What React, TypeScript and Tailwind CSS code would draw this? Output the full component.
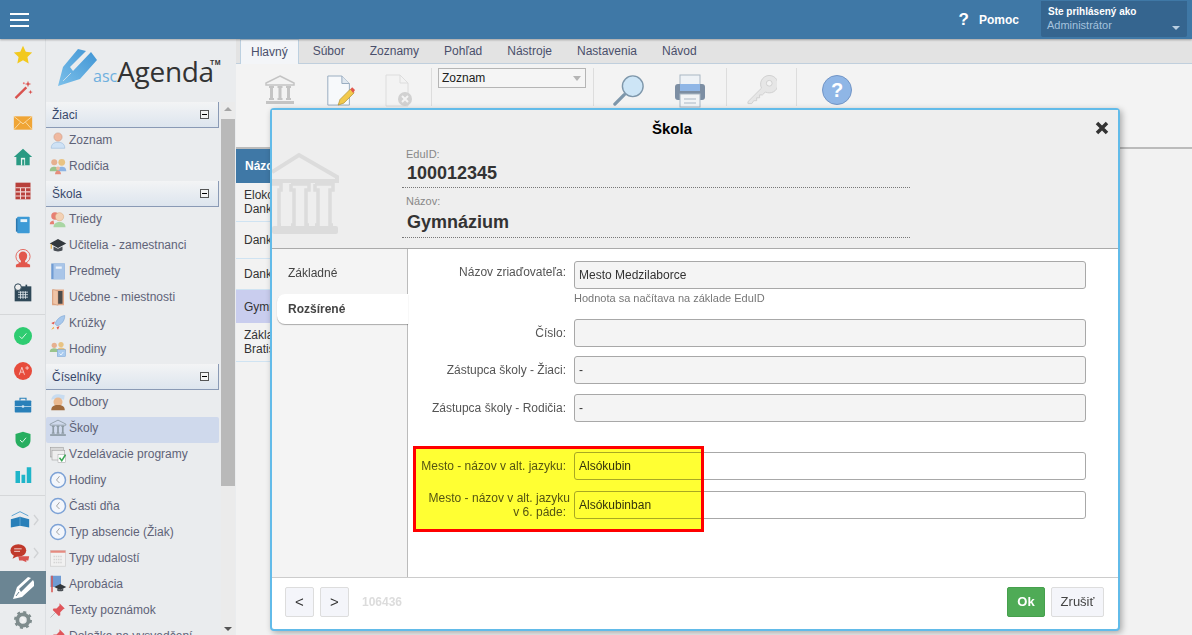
import type { ReactNode } from 'react'

const Ico = ({ children, className = 'w-[18px] h-[18px]', box = '0 0 24 24' }: { children: ReactNode; className?: string; box?: string }) => (
  <svg viewBox={box} className={`${className} shrink-0`}>{children}</svg>
)

const Bank = ({ c = '#9aa6ad', className }: { c?: string; className?: string }) => (
  <Ico className={className} box="0 0 32 32">
    <path d="M16 2 L30 9 V11 H2 V9 Z" fill="none" stroke={c} strokeWidth="1.5" />
    <path d="M5 12h5v2H9v10h1v2H5v-2h1V14H5zM13.500 12h5v2h-1v10h1v2h-5v-2h1V14h-1zM22 12h5v2h-1v10h1v2h-5v-2h1V14h-1z" fill={c} />
    <rect x="2" y="27" width="28" height="3" fill={c} />
  </Ico>
)

const Clock = () => (
  <Ico>
    <circle cx="12" cy="12" r="10" fill="#f3f6fb" stroke="#7da2d6" strokeWidth="2" />
    <path d="M14 7l-4 5 4 4" fill="none" stroke="#9a9a9a" strokeWidth="1.200" />
  </Ico>
)

const Pin = () => (
  <Ico>
    <path d="M2 22l8-8" stroke="#b8b8b8" strokeWidth="1.200" />
    <path d="M14 3l7 7-2 1-4 4 0 4-2 1-8-8 1-2h4l4-4z" fill="#e0555a" />
  </Ico>
)

const Chevron = () => (
  <svg viewBox="0 0 6 12" className="w-[6px] h-[12px] shrink-0"><path d="M1 1l4 5-4 5" fill="none" stroke="#d0d2d4" strokeWidth="1.300" /></svg>
)

const railTop = [
  <Ico className="w-[20px] h-[20px]"><path d="M12 1l3.300 7.200 7.700.9-5.700 5.300 1.500 7.800L12 18.300 5.200 22.200l1.500-7.800L1 9.100l7.700-.9z" fill="#f2c91e" /></Ico>,
  <Ico className="w-[20px] h-[20px]"><path d="M2 22L15 9l2 2L4 24z" fill="#d9534f" /><path d="M18 2l1 3 3 1-3 1-1 3-1-3-3-1 3-1zM21 13l.7 2 2 .7-2 .7-.7 2-.7-2-2-.7 2-.7z" fill="#d9534f" /><circle cx="13" cy="5" r="1.200" fill="#e77" /></Ico>,
  <Ico className="w-[20px] h-[20px]"><rect x="1" y="4" width="22" height="16" fill="#f0a535" /><path d="M1 4l11 9 11-9M1 20l8-9M23 20l-8-9" fill="none" stroke="#fbe3b5" strokeWidth="1" /></Ico>,
  <Ico className="w-[20px] h-[20px]"><path d="M12 2L1 12h3v10h16V12h3z" fill="#2a9a83" /><rect x="9.500" y="13" width="5" height="9" fill="#e9f4f1" /><rect x="11" y="15" width="2.500" height="7" fill="#2a9a83" /></Ico>,
  <Ico className="w-[20px] h-[20px]"><rect x="3" y="2" width="18" height="20" fill="#b8403b" /><path d="M3 8h18M3 13h18M3 18h18M9 8v14M15 8v14" stroke="#f1d8d6" strokeWidth="1.300" /></Ico>,
  <Ico className="w-[20px] h-[20px]"><rect x="5" y="2" width="15" height="20" rx="1" fill="#3d9ad6" /><rect x="3.500" y="4" width="2" height="16" fill="#2a78b0" /><rect x="9" y="5" width="8" height="3.500" fill="#e8f3fa" /></Ico>,
  <Ico className="w-[20px] h-[20px]"><circle cx="12" cy="9" r="8.500" fill="none" stroke="#e2574c" strokeWidth="1" /><path d="M12 3a5 5 0 0 1 5 5c0 3-1.500 5-2.500 6v2l6 3v3H3.500v-3l6-3v-2C8.500 13 7 11 7 8a5 5 0 0 1 5-5z" fill="#e2574c" /></Ico>,
  <Ico className="w-[20px] h-[20px]"><rect x="2" y="4" width="20" height="18" fill="#2f4858" /><path d="M6 11h12M6 14h12M6 17h12M9 10v9M12 10v9M15 10v9" stroke="#dfe6ea" strokeWidth="1" /><rect x="15" y="2" width="2" height="4" fill="#2f4858" /><circle cx="6" cy="5" r="4" fill="#eee" stroke="#2f4858" strokeWidth="1.200" /></Ico>,
]

const railMid = [
  <Ico className="w-[18px] h-[18px]"><circle cx="12" cy="12" r="12" fill="#2ecc71" /><path d="M7.500 12.500l3 3 6-7" fill="none" stroke="#dff7e8" strokeWidth="1.300" /></Ico>,
  <Ico className="w-[18px] h-[18px]"><circle cx="12" cy="12" r="12" fill="#e74c3c" /><path d="M7 17l3.500-10L14 17M8.300 13.500h4.500M15 8h5M17.500 5.500v5" fill="none" stroke="#f8d3cf" strokeWidth="1.200" /></Ico>,
  <Ico className="w-[18px] h-[18px]"><rect x="1" y="6" width="22" height="16" rx="1" fill="#2980b9" /><path d="M8 6V3h8v3" fill="none" stroke="#2980b9" strokeWidth="1.500" /><path d="M1 14h22" stroke="#d5e6f2" strokeWidth="1" /><rect x="10.500" y="12.500" width="3" height="3" fill="#d5e6f2" /></Ico>,
  <Ico className="w-[18px] h-[18px]"><path d="M12 1l10 3v8c0 6-4 9.500-10 11C6 21.500 2 18 2 12V4z" fill="#27ae60" /><path d="M8 12l3 3 5-6" fill="none" stroke="#dff7e8" strokeWidth="1.300" /></Ico>,
  <Ico className="w-[18px] h-[18px]"><path d="M2 8h6v16H2zM10 13h5v11h-5zM17 3h6v21h-6z" fill="#1fb5c9" /></Ico>,
]

type Item = { t: string; i: ReactNode; active?: boolean }

const items1: Item[] = [
  { t: 'Zoznam', i: <Ico><circle cx="12" cy="8" r="5.500" fill="#f0b9a0" stroke="#c89a84" strokeWidth=".7" /><path d="M3 23c0-6 4-8 9-8s9 2 9 8z" fill="#cfe2f5" stroke="#8fb2d6" strokeWidth=".7" /></Ico> },
  { t: 'Rodičia', i: <Ico><circle cx="7" cy="7" r="4" fill="#e6b08f" /><path d="M1 19c0-5 3-6 6-6s5 1 5 6z" fill="#9ac48c" /><circle cx="17" cy="7" r="4.500" fill="#e8c382" /><path d="M12 19c0-5 2-6 5-6s6 1 6 6z" fill="#8db4e4" /><circle cx="12" cy="15" r="2.500" fill="#f0b9a0" /><path d="M8 23c0-3 2-5 4-5s4 2 4 5z" fill="#e58e7c" /></Ico> },
]
const items2: Item[] = [
  { t: 'Triedy', i: <Ico><circle cx="8" cy="8" r="5" fill="#e77f72" /><circle cx="14" cy="9" r="5.500" fill="#f3d1b5" stroke="#d8a878" strokeWidth=".7" /><path d="M6 23c0-5 4-7 8-7s8 2 8 7z" fill="#a9d6a4" /><path d="M1 19c0-3 2-4 5-5l1 5z" fill="#e77f72" /></Ico> },
  { t: 'Učitelia - zamestnanci', i: <Ico><path d="M12 4L1 10l11 6 11-6z" fill="#33383d" /><path d="M6 14v5c2 2 10 2 12 0v-5l-6 3z" fill="#4a4f55" /><path d="M3 11v6" stroke="#e2a93b" strokeWidth="1.500" /></Ico> },
  { t: 'Predmety', i: <Ico><rect x="3" y="2" width="18" height="21" fill="#6f9bd3" /><rect x="6" y="2" width="15" height="21" fill="#a9c5e8" /><rect x="9" y="6" width="8" height="3" fill="#eef4fb" /></Ico> },
  { t: 'Učebne - miestnosti', i: <Ico><rect x="4" y="2" width="16" height="21" fill="#e4a987" /><rect x="11" y="4" width="7" height="17" fill="#4c4c4c" /><path d="M5 2l7 2v19l-7-2z" fill="#f0c4a6" stroke="#c08a68" strokeWidth=".5" /></Ico> },
  { t: 'Krúžky', i: <Ico><path d="M21 2c-7 1-11 6-13 11l3 3c5-2 10-6 10-14z" fill="#a8c8ec" stroke="#6e9bd0" strokeWidth=".7" /><path d="M8 10l-5 2 3 2zM14 16l-2 5-2-3z" fill="#e2574c" /><path d="M6 17l-3 4 4-2z" fill="#f0a535" /></Ico> },
  { t: 'Hodiny', i: <Ico><circle cx="7" cy="7" r="3.500" fill="#e6b08f" /><circle cx="16" cy="6" r="3.500" fill="#e8c382" /><path d="M1 16c0-4 3-5 6-5s5 1 5 5z" fill="#9ac48c" /><path d="M11 15c0-4 2-5 5-5s6 1 6 5z" fill="#e8c382" /><rect x="11" y="13" width="11" height="9" fill="#a9cbef" stroke="#6e9bd0" strokeWidth=".6" /><path d="M14 18l2 2 3-4" fill="none" stroke="#fff" strokeWidth="1" /></Ico> },
]
const items3: Item[] = [
  { t: 'Odbory', i: <Ico><path d="M3 9c1-6 6-8 12-7l6 1-1 6c-5-2-12-2-17 0z" fill="#c8dcf0" /><circle cx="12" cy="12" r="6" fill="#eab98f" /><path d="M3 23c0-5 3-7 9-7s9 2 9 7z" fill="#a06a3c" /></Ico> },
  { t: 'Školy', i: <Bank c="#8d9aa3" className="w-[18px] h-[18px]" />, active: true },
  { t: 'Vzdelávacie programy', i: <Ico><rect x="2" y="3" width="17" height="13" fill="#d8d8d8" stroke="#999" strokeWidth=".7" /><rect x="4" y="7" width="17" height="13" fill="#eee" stroke="#999" strokeWidth=".7" /><rect x="12" y="13" width="10" height="10" fill="#fff" stroke="#999" strokeWidth=".6" /><path d="M14 17l3 4 5-8" fill="none" stroke="#3aa655" strokeWidth="2" /></Ico> },
  { t: 'Hodiny', i: <Clock /> },
  { t: 'Časti dňa', i: <Clock /> },
  { t: 'Typ absencie (Žiak)', i: <Clock /> },
  { t: 'Typy udalostí', i: <Ico><rect x="2" y="2" width="20" height="21" fill="#f1f1f1" stroke="#cfcfcf" /><rect x="2" y="2" width="20" height="3" fill="#e58a80" /><path d="M6 10h12M6 14h12M6 18h12" stroke="#d5d5d5" strokeWidth="2" strokeDasharray="2 1" /></Ico> },
  { t: 'Aprobácia', i: <Ico><rect x="2" y="1" width="14" height="15" fill="#6f9bd3" /><rect x="3" y="1" width="2" height="22" fill="#d9534f" /><path d="M15 12l-8 4 8 4 8-4z" fill="#33383d" /><path d="M11 18v3c2 1 6 1 8 0v-3l-4 2z" fill="#4a4f55" /></Ico> },
  { t: 'Texty poznámok', i: <Pin /> },
  { t: 'Doložka na vysvedčení', i: <Pin /> },
]

const NavGroup = ({ title, items, gap, rowPad }: { title: string; items: Item[]; gap: string; rowPad: string }) => (
  <div className={gap}>
    <div className="h-[26px] flex items-center justify-between pl-[6px] pr-[9px] w-[173px] bg-gradient-to-b from-[#f3f4f5] to-[#dde5ee] border-b border-r border-[#8a9ab5] text-[12px] text-[#37476a]">
      {title}
      <span className="w-[9px] h-[9px] border border-[#555] bg-[#f4f4f4] flex items-center justify-center"><span className="w-[5px] h-px bg-black" /></span>
    </div>
    {items.map((it) => (
      <div key={it.t} className={`h-[26px] w-[173px] flex items-center gap-[2px] pl-[3px] text-[12px] whitespace-nowrap text-[#5f6378] ${rowPad} ${it.active ? 'bg-[#cfd9ec] rounded-[2px]' : ''}`}>
        {it.i}
        {it.t}
      </div>
    ))}
  </div>
)

const Field = ({ label, value, muted = true, className = '' }: { label: ReactNode; value: string; muted?: boolean; className?: string }) => (
  <div className={`flex items-center gap-[8px] ${className}`}>
    <div className="w-[158px] text-right text-[12px] leading-[14px] text-[#555]">{label}</div>
    <div className={`w-[512px] h-[28px] rounded-[3px] border border-[#a8a8a8] flex items-center pl-[4px] text-[12px] text-[#333] ${muted ? 'bg-[#f4f4f4]' : 'bg-white'}`}>{value}</div>
  </div>
)

export default function App() {
  return (
    <div className="relative w-[1192px] h-[635px] overflow-hidden flex flex-col bg-[#f2f2f2] font-['Liberation_Sans',Arial,sans-serif]">
      {/* top bar */}
      <header className="h-[39px] shrink-0 bg-[#3f78a6] flex items-center shadow-[0_1px_2px_rgba(0,0,0,0.3)] relative z-10">
        <div className="ml-[10px] w-[19px] flex flex-col gap-[4px]">
          <span className="h-[2px] bg-white" /><span className="h-[2px] bg-white" /><span className="h-[2px] bg-white" />
        </div>
        <div className="ml-auto flex items-center text-white">
          <span className="text-[17px] font-bold mr-[10px]">?</span>
          <span className="text-[12px] font-bold mr-[22px]">Pomoc</span>
          <div className="w-[146px] h-[36px] mb-[1px] mr-[5px] bg-[#35658f] rounded-b-[2px] px-[6px] pt-[4px] relative">
            <div className="text-[10px] leading-[13px] font-bold pl-px">Ste prihlásený ako</div>
            <div className="text-[11px] leading-[15px] text-[#a5c3de]">Administrátor</div>
            <span className="absolute right-[7px] top-[25px] border-x-[4px] border-x-transparent border-t-[4px] border-t-[#b9cfe2]" />
          </div>
        </div>
      </header>

      <div className="flex flex-1 min-h-0">
        {/* icon rail */}
        <aside className="w-[46px] shrink-0 bg-[#eaecee] flex flex-col items-center border-r border-[#dcdfe2]">
          <div className="w-full flex flex-col items-center gap-[14px] pt-[6px] pb-[11px] border-b border-[#d5d7d9]">
            {railTop}
          </div>
          <div className="w-full flex flex-col items-center gap-[16.500px] pt-[12px] pb-[12px] border-b border-[#d5d7d9]">
            {railMid}
          </div>
          <div className="h-[46px] pl-[10px] pt-[2px] w-full flex items-center gap-[3px]">
            <Ico className="w-[20px] h-[20px]"><path d="M12 8L1 11v10l11-2 11 2V11z" fill="#2980b9" /><path d="M12 8v11M2 7l10-5 10 5" fill="none" stroke="#5fa5d3" strokeWidth="1.200" /></Ico>
            <Chevron />
          </div>
          <div className="h-[29px] pl-[10px] pb-[7px] w-full flex items-center gap-[3px]">
            <Ico className="w-[20px] h-[20px]"><ellipse cx="10" cy="9" rx="9.500" ry="7.500" fill="#c0392b" /><path d="M5 14l-2 5 6-3z" fill="#c0392b" /><path d="M10 16h13l-1 5h-3l1 2-5-2h-4z" fill="#d9534f" /><path d="M5 7h9M5 10h7" stroke="#eecfcb" strokeWidth="1.200" /></Ico>
            <Chevron />
          </div>
          <div className="w-[46px] h-[33px] bg-[#6b8593] flex items-center justify-center">
            <Ico className="w-[24px] h-[24px]"><path d="M2 23L6 11 17 1l3 1L8 13l2 3L22 4l1 2 0 4-12 11z" fill="#fff" /><path d="M5 20l3-4" stroke="#6b8593" strokeWidth="1" /></Ico>
          </div>
          <div className="mt-[7px]">
            <Ico className="w-[18px] h-[18px]"><circle cx="12" cy="12" r="7.500" fill="none" stroke="#7f8c8d" strokeWidth="5" /><circle cx="12" cy="12" r="10.500" fill="none" stroke="#7f8c8d" strokeWidth="3" strokeDasharray="4 4.250" /><path d="M10 8l4 4-4 4" fill="none" stroke="#f4f4f4" strokeWidth="2" /></Ico>
          </div>
        </aside>

        {/* nav */}
        <nav className="w-[190px] shrink-0 bg-[#eaecee] flex flex-col">
          <div className="h-[63px] shrink-0 pl-[12px] flex items-start pt-[10px]">
            <Ico className="w-[40px] h-[39px]" box="0 0 40 39">
              <defs><linearGradient id="logo" x1="0" y1="1" x2="1" y2="0"><stop offset="0" stopColor="#7cc0ea" /><stop offset="1" stopColor="#3f94d4" /></linearGradient></defs>
              <path d="M0 37L5 18 20 0l8 2L12 18l3 4L33 3l6 8L22 30z" fill="url(#logo)" />
              <path d="M5 32l8-8" stroke="#eaecee" strokeWidth="1" opacity=".7" />
            </Ico>
            <div className="flex items-baseline -ml-[5px] mt-[8px] leading-none">
              <span className="text-[16px] text-[#6fb0de] font-['Open_Sans',sans-serif]">asc</span>
              <span className="text-[28px] font-medium tracking-[-0.3px] text-[#333] font-['Open_Sans',sans-serif]">Agenda</span>
            </div>
            <span className="text-[7px] font-bold text-[#333] mt-[10px] -ml-[4px] leading-none tracking-[0.5px]">TM</span>
          </div>
          <div className="flex flex-1 min-h-0">
            <div className="w-[175px] overflow-hidden">
              <NavGroup title="Žiaci" items={items1} gap="" rowPad="pb-[3px]" />
              <NavGroup title="Škola" items={items2} gap="mt-px" rowPad="pb-[3px]" />
              <NavGroup title="Číselníky" items={items3} gap="mt-px" rowPad="pb-[5px] translate-y-px" />
            </div>
            <div className="w-[14px] shrink-0 flex flex-col items-center bg-[#ebebeb]">
              <span className="mt-[5px] border-x-[4px] border-x-transparent border-b-[4px] border-b-[#a5a5a5]" />
              <div className="w-full h-[367px] mt-[8px] bg-[#b9b9b9]" />
              <span className="mt-auto mb-[4px] border-x-[4px] border-x-transparent border-t-[4px] border-t-[#555]" />
            </div>
          </div>
        </nav>

        {/* main */}
        <main className="flex-1 min-w-0 flex flex-col">
          <div className="h-[25px] shrink-0 bg-[#e3e3e3] border-b border-[#c0cfdd] flex items-end pl-[4px] text-[12px] text-[#4a4f6b]">
            <span className="h-[25px] -mb-px px-[10px] flex items-center bg-[#f3f5f8] border border-b-0 border-[#bcd0e0]">Hlavný</span>
            <span className="h-[24px] flex items-center pl-[14px] pr-[12px]">Súbor</span>
            <span className="h-[24px] flex items-center px-[13px]">Zoznamy</span>
            <span className="h-[24px] flex items-center px-[12px]">Pohľad</span>
            <span className="h-[24px] flex items-center pl-[13px] pr-[12px]">Nástroje</span>
            <span className="h-[24px] flex items-center px-[13px]">Nastavenia</span>
            <span className="h-[24px] flex items-center px-[12px]">Návod</span>
          </div>
          <div className="h-[85px] shrink-0 bg-[#f3f3f3] border-b-2 border-[#bbb] flex items-start pt-[4px] relative">
            <div className="flex items-start pt-[6px] pl-[28px] h-[39px]">
              <Bank c="#c4c4c4" className="w-[32px] h-[32px]" />
              <Ico className="w-[30px] h-[34px] ml-[29px]" box="0 0 32 34">
                <path d="M3 1h15l8 8v23H3z" fill="#f7f9fb" stroke="#94a9bd" strokeWidth="1" /><path d="M18 1v8h8" fill="#dfe7ef" stroke="#94a9bd" strokeWidth="1" />
                <path d="M14 32l2-6 11-11 4 4-11 11z" fill="#f2c94c" stroke="#a98a2c" strokeWidth=".7" /><path d="M27 15l2-2 3 3-2 3z" fill="#e2574c" />
              </Ico>
              <Ico className="w-[30px] h-[34px] ml-[29px] opacity-80" box="0 0 30 34">
                <path d="M2 1h14l8 8v23H2z" fill="#f4f4f4" stroke="#d8d8d8" /><path d="M16 1v8h8" fill="none" stroke="#d8d8d8" />
                <circle cx="21" cy="25" r="7" fill="#c9c9c9" /><path d="M18 22l6 6M24 22l-6 6" stroke="#f4f4f4" strokeWidth="2" />
              </Ico>
            </div>
            <div className="w-px h-[38px] bg-[#ddd] ml-[17px]" />
            <div className="ml-[6px] w-[148px] h-[20px] border border-[#b5b5b5] bg-[#f5f5f5] flex items-center justify-between pl-[3px] pr-[4px] text-[12px] text-[#222]">
              Zoznam
              <span className="border-x-[4px] border-x-transparent border-t-[5px] border-t-[#b5b5b5]" />
            </div>
            <div className="w-px h-[38px] bg-[#ddd] ml-[7px]" />
            <Ico className="w-[32px] h-[32px] ml-[19px] mt-[6px]" box="0 0 34 34">
              <circle cx="21" cy="13" r="11" fill="#cde5f6" stroke="#7e97ab" strokeWidth="1.500" /><path d="M12 22L2 32" stroke="#7e97ab" strokeWidth="3.500" strokeLinecap="round" />
            </Ico>
            <Ico className="w-[32px] h-[34px] ml-[29px] mt-[6px]" box="0 0 32 34">
              <rect x="6" y="1" width="20" height="14" fill="#eef2f6" stroke="#aab7c4" /><rect x="1" y="10" width="30" height="16" rx="3" fill="#7c8ea3" /><rect x="6" y="10" width="20" height="7" fill="#8fb6e6" /><rect x="6" y="20" width="20" height="13" fill="#f2f4f6" stroke="#aab7c4" /><path d="M10 25h12M10 29h12" stroke="#aab7c4" />
            </Ico>
            <div className="w-px h-[38px] bg-[#ddd] ml-[20px]" />
            <Ico className="w-[30px] h-[34px] ml-[20px] mt-[6px]" box="0 0 31 34">
              <path d="M1 28l14-14a9 9 0 1 1 4 4L16 21h-3v3h-3v3H7l-2 3H1z" fill="#e6e6e6" stroke="#cfcfcf" /><circle cx="23" cy="9" r="3" fill="#f3f3f3" stroke="#cfcfcf" />
            </Ico>
            <div className="w-px h-[38px] bg-[#ddd] ml-[19px]" />
            <div className="w-[30px] h-[30px] ml-[25px] mt-[7px] rounded-full bg-[#8fb6e6] border border-[#7295c6] text-white font-bold text-[20px] flex items-center justify-center">?</div>
          </div>
          <div className="flex-1 w-[120px] text-[12px] leading-[14px] text-[#333]">
            <div className="h-[34px] bg-[#3f78a6] pl-[9px] flex items-center text-white font-bold whitespace-nowrap">Názov</div>
            <div className="h-[39px] pl-[8px] flex items-center border-b border-[#cfe3f2]"><span>Elokované<br />Dankova</span></div>
            <div className="h-[37px] pl-[8px] flex items-center border-b border-[#cfe3f2]">Dankova</div>
            <div className="h-[31px] pl-[8px] flex items-center border-b border-[#cfe3f2]">Dankova</div>
            <div className="h-[33px] pl-[8px] flex items-center bg-[#c9cdee]">Gymnázium</div>
            <div className="h-[39px] pl-[8px] flex items-center border-b border-[#cfe3f2]"><span>Základná<br />Bratislava</span></div>
          </div>
        </main>
      </div>

      {/* modal */}
      <div className="absolute left-[270px] top-[108px] w-[850px] h-[523px] z-20 flex flex-col bg-white border-2 border-[#62bbe9] rounded-[4px] shadow-[2px_2px_6px_rgba(0,0,0,0.3)]">
        <div className="h-[139px] shrink-0 bg-[#eeeeee] border-b border-[#aaa] relative pl-[130px] flex flex-col">
          <div className="absolute left-0 right-[46px] top-[9px] text-center text-[15px] leading-[20px] font-bold text-black">Škola</div>
          <Ico className="absolute right-[9px] top-[11px] w-[14px] h-[14px]" box="0 0 14 14"><path d="M2 2l10 10M12 2L2 12" stroke="#333" strokeWidth="3.500" /></Ico>
          <Ico className="absolute left-0 top-[42px] w-[67px] h-[84px]" box="0 0 67 84">
            <path d="M0 20L27 3l38 22v4H0" fill="none" stroke="#dcdcdc" strokeWidth="4" />
            <path d="M0 32h9v6H7v35h2M19 32h18v6h-3v35h3M19 32v6h3v35h-3M43 32h18v6h-3v35h3M43 32v6h3v35h-3" fill="none" stroke="#dcdcdc" strokeWidth="3.500" />
            <rect x="0" y="74" width="66" height="8" rx="2" fill="#dcdcdc" />
          </Ico>
          <div className="w-[508px] h-[40px] mt-[38px] border-b border-dotted border-[#777] pl-[4px]">
            <div className="text-[11px] leading-[13px] text-[#888]">EduID:</div>
            <div className="text-[18px] leading-[22px] mt-px pl-px font-bold text-[#333]">100012345</div>
          </div>
          <div className="w-[508px] mt-[7px] h-[43px] border-b border-dotted border-[#777] pl-[4px]">
            <div className="text-[11px] leading-[13px] text-[#888]">Názov:</div>
            <div className="text-[18px] leading-[22px] mt-[3px] pl-px font-bold text-[#333]">Gymnázium</div>
          </div>
        </div>

        <div className="flex-1 min-h-0 flex">
          <div className="w-[136px] shrink-0 bg-[#f4f4f4] border-r border-[#bbb] pt-[17px] text-[12px] text-[#444]">
            <div className="pl-[16px] leading-[14px]">Základné</div>
            <div className="mt-[14px] ml-[5px] -mr-px h-[30px] pl-[11px] flex items-center bg-white font-bold rounded-l-[8px] shadow-[0_1px_1px_rgba(0,0,0,0.3)] relative">Rozšírené</div>
          </div>
          <div className="flex-1 pt-[12px] relative">
            <Field label={<span className="relative -top-[3px]">Názov zriaďovateľa:</span>} value="Mesto Medzilaborce" />
            <div className="ml-[166px] mt-[3px] text-[11px] leading-[13px] h-[14px] text-[#777]">Hodnota sa načítava na základe EduID</div>
            <Field label="Číslo:" value="" className="mt-[13px]" />
            <Field label="Zástupca školy - Žiaci:" value="-" className="mt-[9px]" />
            <Field label="Zástupca školy - Rodičia:" value="-" className="mt-[10px]" />
            <Field label="Mesto - názov v alt. jazyku:" value="Alsókubin" muted={false} className="mt-[30px]" />
            <Field label={<><span className="-mr-[4px]">Mesto - názov v alt. jazyku</span><br />v 6. páde:</>} value="Alsókubinban" muted={false} className="mt-[11px]" />
            {/* highlight drawn on top of the two fields */}
            <div className="absolute left-[5px] top-[197px] w-[291px] h-[86px] bg-[#ffff33] mix-blend-multiply pointer-events-none" />
            <div className="absolute left-[5px] top-[197px] w-[291px] h-[86px] border-[3px] border-[#ff0000] pointer-events-none" />
          </div>
        </div>

        <div className="h-[52px] shrink-0 border-t border-[#ccc] flex items-start pt-[9px] pl-[13px] pr-[14px]">
          <button className="w-[29px] h-[30px] rounded-[2px] border border-[#ddd] bg-[#f4f5fa] text-[15px] text-[#333]">&lt;</button>
          <button className="w-[29px] h-[30px] ml-[6px] rounded-[2px] border border-[#ddd] bg-[#f4f5fa] text-[15px] text-[#333]">&gt;</button>
          <span className="ml-[13px] mt-[8px] leading-[14px] text-[12px] font-bold text-[#dcdcdc]">106436</span>
          <button className="ml-auto w-[38px] h-[30px] rounded-[2px] bg-[#4fab56] border border-[#46a04d] text-white text-[13px] font-bold">Ok</button>
          <button className="ml-[6px] w-[53px] h-[30px] rounded-[2px] border border-[#ddd] bg-[#f4f5fa] text-[13px] text-[#444]">Zrušiť</button>
        </div>
      </div>
    </div>
  )
}
